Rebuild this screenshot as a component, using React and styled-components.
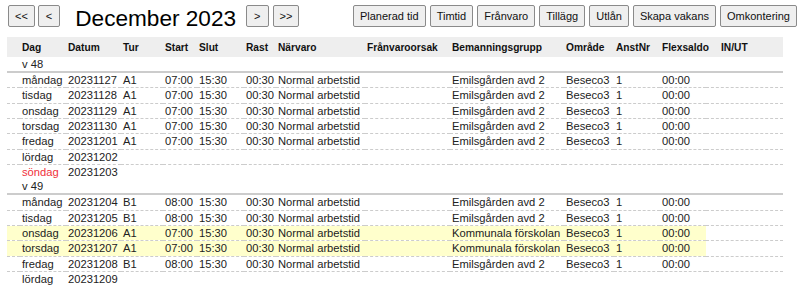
import styled, { createGlobalStyle } from "styled-components";

const GlobalStyle = createGlobalStyle`
  body {
    margin: 0;
    background: #fff;
    font-family: "Liberation Sans", Arial, sans-serif;
    color: #222;
  }
`;

const weeks = [
  {
    name: "v 48",
    days: [
      { dag: "måndag", datum: "20231127", tur: "A1", start: "07:00", group: "Emilsgården avd 2" },
      { dag: "tisdag", datum: "20231128", tur: "A1", start: "07:00", group: "Emilsgården avd 2" },
      { dag: "onsdag", datum: "20231129", tur: "A1", start: "07:00", group: "Emilsgården avd 2" },
      { dag: "torsdag", datum: "20231130", tur: "A1", start: "07:00", group: "Emilsgården avd 2" },
      { dag: "fredag", datum: "20231201", tur: "A1", start: "07:00", group: "Emilsgården avd 2" },
      { dag: "lördag", datum: "20231202" },
      { dag: "söndag", datum: "20231203", red: true },
    ],
  },
  {
    name: "v 49",
    days: [
      { dag: "måndag", datum: "20231204", tur: "B1", start: "08:00", group: "Emilsgården avd 2" },
      { dag: "tisdag", datum: "20231205", tur: "B1", start: "08:00", group: "Emilsgården avd 2" },
      { dag: "onsdag", datum: "20231206", tur: "A1", start: "07:00", group: "Kommunala förskolan", mark: true },
      { dag: "torsdag", datum: "20231207", tur: "A1", start: "07:00", group: "Kommunala förskolan", mark: true },
      { dag: "fredag", datum: "20231208", tur: "B1", start: "08:00", group: "Emilsgården avd 2" },
      { dag: "lördag", datum: "20231209" },
    ],
  },
];

const widths = [13, 46, 55, 42, 34, 47, 32, 89, 85, 114, 50, 46, 46, 77];
const headers = ["", "Dag", "Datum", "Tur", "Start", "Slut", "Rast", "Närvaro", "Frånvaroorsak", "Bemanningsgrupp", "Område", "AnstNr", "Flexsaldo", "IN/UT"];

const Page = styled.div`
  padding: 5px 8px 0 8px;
`;

const TopBar = styled.div`
  display: flex;
  align-items: flex-start;
  height: 28px;
`;

const NavGroup = styled.div`
  display: flex;
  gap: ${(p) => p.$gap || 3}px;
  margin-left: ${(p) => (p.$right ? "auto" : "0")};
`;

const Button = styled.button`
  height: 22px;
  padding: 0 ${(p) => (p.$narrow ? 7 : 6)}px;
  font-family: "Liberation Sans", Arial, sans-serif;
  font-size: 11px;
  color: #111;
  background: #efefef;
  border: 1px solid #8a8a8a;
  border-radius: 2px;
  cursor: pointer;
`;

const Title = styled.h1`
  margin: 1px 10px 0 15px;
  font-size: 22.6px;
  font-weight: normal;
  line-height: 25px;
  color: #000;
`;

const Table = styled.table`
  margin: 4px 0 0 -1px;
  width: 776px;
  border-collapse: collapse;
  table-layout: fixed;
  font-size: 11.2px;
`;

const HeadCell = styled.th`
  height: 20px;
  padding: 0 0 0 ${(p) => (p.$pad ? 15 : 2)}px;
  background: #eeeeee;
  font-size: 10.2px;
  font-weight: bold;
  text-align: left;
  white-space: nowrap;
  color: #111;
`;

const WeekCell = styled.td`
  height: 14px;
  padding: 0 0 0 15px;
  line-height: 14px;
  border-bottom: 2px solid #cccccc;
`;

const Cell = styled.td`
  height: 14.33px;
  padding: 0 0 0 2px;
  line-height: 14.33px;
  white-space: nowrap;
  overflow: hidden;
  color: ${(p) => (p.$red ? "#f0303a" : "#222")};
  background: ${(p) => (p.$mark ? "#ffffcc" : "transparent")};
  border-bottom: ${(p) => (p.$last ? "none" : "1px dashed #cccccc")};
`;

const DayRow = ({ d, last }) => {
  const work = !!d.tur;
  const values = [
    "",
    d.dag,
    d.datum,
    d.tur || "",
    work ? d.start : "",
    work ? "15:30" : "",
    work ? "00:30" : "",
    work ? "Normal arbetstid" : "",
    "",
    d.group || "",
    work ? "Beseco3" : "",
    work ? "1" : "",
    work ? "00:00" : "",
    "",
  ];
  return (
    <tr>
      {values.map((v, i) => (
        <Cell
          key={i}
          $last={last}
          $red={i === 1 && d.red}
          $mark={d.mark && i < 13}
          style={d.mark && i === 0 ? { boxShadow: "-7px 0 0 #ffffcc" } : undefined}
        >
          {v}
        </Cell>
      ))}
    </tr>
  );
};

export default function App() {
  return (
    <>
      <GlobalStyle />
      <Page>
        <TopBar>
          <NavGroup>
            <Button>&lt;&lt;</Button>
            <Button $narrow>&lt;</Button>
          </NavGroup>
          <Title>December 2023</Title>
          <NavGroup $gap={4}>
            <Button $narrow>&gt;</Button>
            <Button>&gt;&gt;</Button>
          </NavGroup>
          <NavGroup $right $gap={4}>
            <Button>Planerad tid</Button>
            <Button>Timtid</Button>
            <Button>Frånvaro</Button>
            <Button>Tillägg</Button>
            <Button>Utlån</Button>
            <Button>Skapa vakans</Button>
            <Button>Omkontering</Button>
          </NavGroup>
        </TopBar>
        <Table>
          <colgroup>
            {widths.map((w, i) => (
              <col key={i} style={{ width: w }} />
            ))}
          </colgroup>
          <thead>
            <tr>
              {headers.map((h, i) => (
                <HeadCell key={i} $pad={i === 13}>
                  {h}
                </HeadCell>
              ))}
            </tr>
          </thead>
          <tbody>
            {weeks.map((w) => [
              <tr key={w.name}>
                <WeekCell colSpan={14}>{w.name}</WeekCell>
              </tr>,
              ...w.days.map((d, i) => (
                <DayRow key={w.name + d.datum} d={d} last={i === w.days.length - 1} />
              )),
            ])}
          </tbody>
        </Table>
      </Page>
    </>
  );
}
